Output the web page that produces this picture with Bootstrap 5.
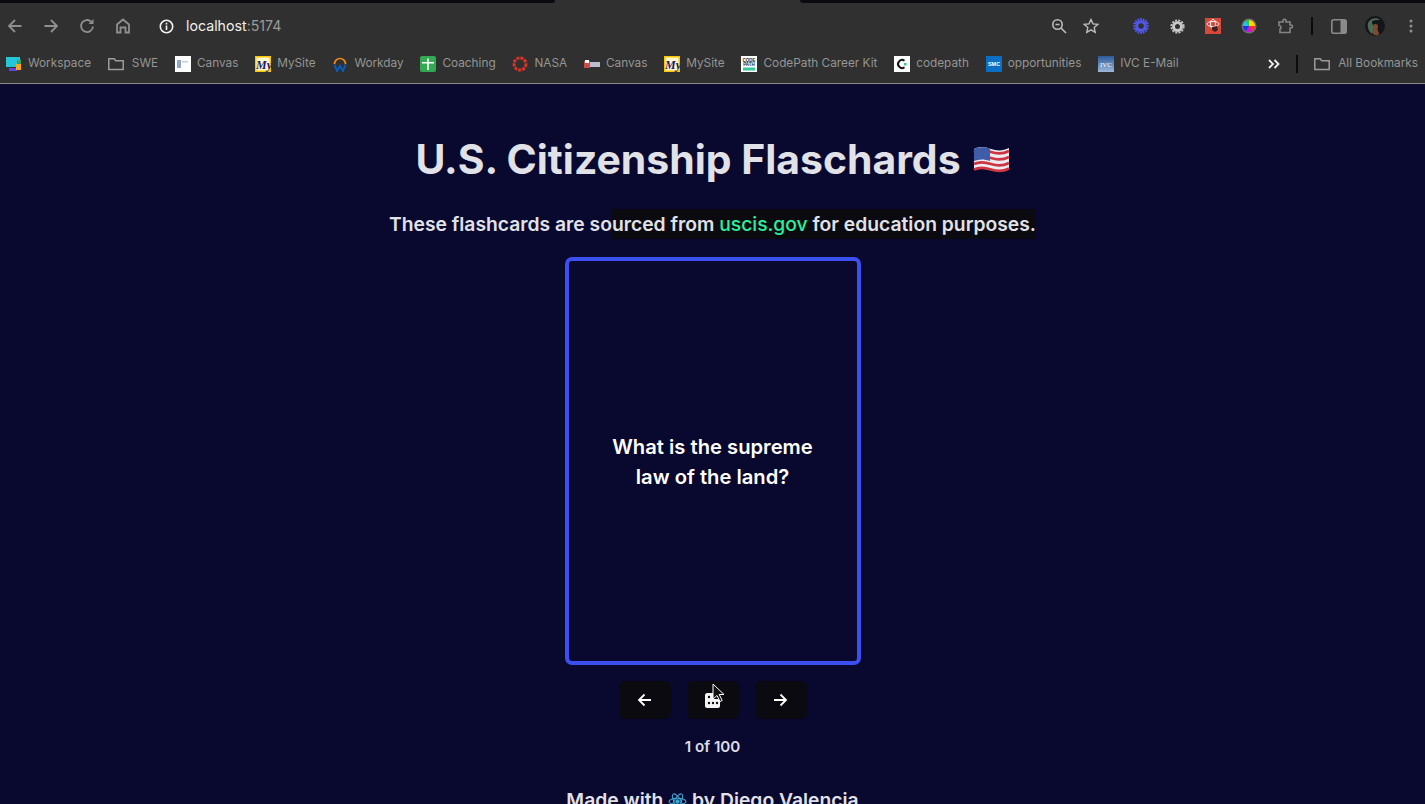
<!DOCTYPE html>
<html lang="en">
<head>
    <meta charset="UTF-8">
    <title>U.S. Citizenship Flaschards</title>
    <link rel="stylesheet" href="https://cdn.jsdelivr.net/npm/bootstrap@5.3.0/dist/css/bootstrap.min.css">
    <style>
        html, body { height: 100%; overflow: hidden; }
        body { background: #09082e; font-family: Inter, "Liberation Sans", sans-serif; color: #e1e1e8; }
        .top-strip { height: 3px; background: #2f302f; }
        .top-strip span { background: #0a0a12; }
        .strip-a { width: 555px; border-bottom-right-radius: 3px; }
        .strip-b { flex: 1; margin-left: 245px; border-bottom-left-radius: 3px; }
        .tool-row { height: 46px; background: #2f302f; padding-left: 0; overflow: hidden; }
        .tool-slot { width: 36px; height: 36px; flex: none; }
        .slot-back { margin-left: -3px; }
        .slot-info { margin-left: 7px; }
        .slot-star { margin-left: -4px; margin-right: 14px; }
        .slot-dots { width: 28px; }
        .url-text { font-size: 14.2px; color: #f0f0f0; margin-left: 2px; }
        .url-text span { color: #9b9b9b; }
        .v-sep { width: 2px; height: 18px; background: #0b0b0b; flex: none; }
        .mark-row { height: 29px; background: #2f302f; border-bottom: 1px solid #8a8a8a; box-sizing: content-box; padding: 0 7px 5px 6px; font-size: 11.8px; color: #959595; gap: 16.8px; white-space: nowrap; }
        .mark-item { gap: 6px; }
        .folder-item { gap: 8px; }
        .fav { width: 16px; height: 16px; flex: none; display: block; }
        .mark-sep { margin: 0 16px; }
        .main-page { padding-top: 53px; }
        .main-title { font-size: 40.9px; font-weight: 700; line-height: 44px; margin: 0 0 29px; color: #e1e1e8; gap: 12px; }
        .sub-line { font-size: 19.3px; font-weight: 600; line-height: 29px; margin: 0 0 18px; white-space: nowrap; }
        .sub-dark { background: #0a0a10; padding: 3px 0; }
        .sub-link { color: #2bf09e; font-weight: 500; text-decoration: none; }
        .flash-box { width: 296px; height: 408px; border: 4px solid #3c4ff0; border-radius: 7px; font-size: 20.2px; font-weight: 600; line-height: 30px; color: #fff; padding: 2px 32px 0; }
        .nav-btns { gap: 16px; margin-top: 16px; }
        .nav-btn { width: 52px; height: 38px; background: #0a0a10; border: 0; border-radius: 6px; padding: 0; }
        .nav-btn:hover { background: #0a0a10; }
        .count-line { font-size: 15.2px; font-weight: 600; line-height: 20px; margin: 18px 0 0; color: #dcdce4; }
        .made-line { font-size: 19.3px; font-weight: 600; line-height: 24px; margin: 31px 0 0; white-space: nowrap; }
        .cursor-mark { position: absolute; left: 25px; top: 2px; width: 13px; height: 20px; }
    </style>
</head>
<body>
    <header>
        <div class="top-strip d-flex">
            <span class="strip-a"></span>
            <span class="strip-b"></span>
        </div>
        <div class="tool-row d-flex align-items-center">
            <div class="tool-slot slot-back d-flex align-items-center justify-content-center">
                <svg width="16" height="16" viewBox="0 0 16 16" fill="none" stroke="#8f8f8f" stroke-width="1.800"><path d="M14.500 8H2M8 2 2 8l6 6"/></svg>
            </div>
            <div class="tool-slot d-flex align-items-center justify-content-center">
                <svg width="16" height="16" viewBox="0 0 16 16" fill="none" stroke="#8f8f8f" stroke-width="1.800"><path d="M1.500 8H14M8 2l6 6-6 6"/></svg>
            </div>
            <div class="tool-slot d-flex align-items-center justify-content-center">
                <svg width="16" height="16" viewBox="0 0 16 16" fill="none" stroke="#8f8f8f" stroke-width="1.800"><path d="M14 8.500A6 6 0 1 1 12.300 3.800"/><path d="M14.500 1v5h-5z" fill="#8f8f8f" stroke="none"/></svg>
            </div>
            <div class="tool-slot d-flex align-items-center justify-content-center">
                <svg width="16" height="16" viewBox="0 0 16 16" fill="none" stroke="#8f8f8f" stroke-width="1.800"><path d="M2 14.500V6.500L8 1.500l6 5v8h-3.500V9.500h-5v5z"/></svg>
            </div>
            <div class="tool-slot slot-info d-flex align-items-center justify-content-center">
                <svg width="15" height="15" viewBox="0 0 15 15" fill="none" stroke="#f2f2f2" stroke-width="1.600"><circle cx="7.500" cy="7.500" r="6.200"/><path d="M7.500 6.500v4.500M7.500 3.800v1.600"/></svg>
            </div>
            <div class="url-text flex-grow-1">localhost<span>:5174</span></div>
            <div class="tool-slot d-flex align-items-center justify-content-center">
                <svg width="16" height="16" viewBox="0 0 16 16" fill="none" stroke="#bdbdbd" stroke-width="1.600"><circle cx="6.500" cy="6.500" r="4.700"/><path d="M10 10l5 5M4.500 6.500h4"/></svg>
            </div>
            <div class="tool-slot slot-star d-flex align-items-center justify-content-center">
                <svg width="16" height="16" viewBox="0 0 16 16" fill="none" stroke="#bdbdbd" stroke-width="1.400"><path d="M8 1.500l2 4.400 4.700.5-3.500 3.200 1 4.700L8 11.900l-4.200 2.400 1-4.700L1.300 6.400l4.700-.5z"/></svg>
            </div>
            <div class="tool-slot d-flex align-items-center justify-content-center">
                <svg width="16" height="16" viewBox="0 0 16 16" fill="none" stroke="#5458ee" stroke-width="1.700"><path d="M8 0v16M0 8h16M2.300 2.300l11.400 11.400M13.700 2.300 2.300 13.700M4.900 .7l6.200 14.600M11.100 .7 4.900 15.300M.7 4.900l14.600 6.200M15.300 4.900.7 11.100"/><circle cx="8" cy="8" r="2.800" fill="#2f302f" stroke="none"/></svg>
            </div>
            <div class="tool-slot d-flex align-items-center justify-content-center">
                <svg width="15" height="15" viewBox="0 0 15 15" fill="none" stroke="#c8c8c8"><circle cx="7.500" cy="7.500" r="4" stroke-width="3"/><circle cx="7.500" cy="7.500" r="6.300" stroke-width="1.600" stroke-dasharray="2 1.300"/></svg>
            </div>
            <div class="tool-slot d-flex align-items-center justify-content-center">
                <svg width="16" height="16" viewBox="0 0 16 16" fill="none"><rect width="16" height="16" fill="#d5483a"/><g stroke="#fff" stroke-width=".9"><ellipse cx="8" cy="6" rx="6" ry="2.500"/><ellipse cx="8" cy="6" rx="2.500" ry="4.500"/></g><path d="M7 9l5-1 1 4-3 2-3-2z" fill="#3a2320"/></svg>
            </div>
            <div class="tool-slot d-flex align-items-center justify-content-center">
                <svg width="16" height="16" viewBox="0 0 16 16"><circle cx="8" cy="8" r="7.500" fill="#707070"/><path d="M8 8V2a6 6 0 0 1 6 6z" fill="#ffd400"/><path d="M8 8h6a6 6 0 0 1-3 5.200z" fill="#ff2d2d"/><path d="M8 8l3 5.200a6 6 0 0 1-6 0z" fill="#d012d8"/><path d="M8 8l-3 5.200A6 6 0 0 1 2 8z" fill="#2233ee"/><path d="M8 8H2a6 6 0 0 1 3-5.200z" fill="#19c8e8"/><path d="M8 8 5 2.800A6 6 0 0 1 8 2z" fill="#22d33a"/></svg>
            </div>
            <div class="tool-slot d-flex align-items-center justify-content-center">
                <svg width="17" height="16" viewBox="0 0 17 16" fill="none" stroke="#858585" stroke-width="1.600"><path d="M2 4h4V2.500C6 .8 9 .8 9 2.500V4h4v3h1c2 0 2 3 0 3h-1v4.500H3V11c1.500 0 1.500-3.500-1-3.500z"/></svg>
            </div>
            <div class="v-sep mx-2"></div>
            <div class="tool-slot d-flex align-items-center justify-content-center">
                <svg width="16" height="15" viewBox="0 0 16 15" fill="none"><rect x=".8" y=".8" width="14.400" height="13.400" rx="2" stroke="#8a8a8a" stroke-width="1.600"/><rect x="9.500" y="1" width="5.500" height="13" fill="#8a8a8a"/></svg>
            </div>
            <div class="tool-slot me-1 d-flex align-items-center justify-content-center">
                <svg width="20" height="20" viewBox="0 0 20 20"><circle cx="10" cy="10" r="10" fill="#15151a"/><path d="M3 7c2-5 9-6 12-3-3 0-8 0-8 2 0 3 2 3 2 6 0 2-1 4-2 6-3-2-5-7-4-11z" fill="#4c6a58"/><path d="M8 9c2-2 5-1 5 1s-1 3 0 5 2 3 0 4c-2 1-4 0-5-1-1-3 1-4 0-9z" fill="#7b4a30"/></svg>
            </div>
            <div class="tool-slot slot-dots d-flex align-items-center justify-content-center">
                <svg width="4" height="14" viewBox="0 0 4 14" fill="#8f8f8f"><circle cx="2" cy="2" r="1.500"/><circle cx="2" cy="7" r="1.500"/><circle cx="2" cy="12" r="1.500"/></svg>
            </div>
        </div>
        <div class="mark-row d-flex align-items-center">
            <div class="d-flex align-items-center mark-item">
                <svg class="fav" viewBox="0 0 16 16"><rect y="1" width="14" height="10" fill="#26c6da"/><rect x="3" y="12" width="8" height="3" fill="#6a3fe0"/><rect x="10" y="8" width="5" height="6" fill="#f5a623"/><path d="M11 8V3l2 2 2-2v5z" fill="#43a047"/></svg>
                <span>Workspace</span>
            </div>
            <div class="d-flex align-items-center folder-item">
                <svg class="fav" viewBox="0 0 16 16" fill="none" stroke="#9c9c9c" stroke-width="1.500"><path d="M.8 13.500V2.800h5.400l1.500 2h7.500v8.700z"/></svg>
                <span>SWE</span>
            </div>
            <div class="d-flex align-items-center mark-item">
                <svg class="fav" viewBox="0 0 16 16"><rect width="16" height="16" fill="#fff"/><rect x="2" y="4" width="4" height="8" fill="#8ea4c8"/><rect x="7" y="5" width="6" height="1.500" fill="#c5cedd"/></svg>
                <span>Canvas</span>
            </div>
            <div class="d-flex align-items-center mark-item">
                <svg class="fav" viewBox="0 0 16 16"><rect width="16" height="16" fill="#fbc600"/><rect x="1.500" y="1.500" width="13" height="13" fill="#fff8cf"/><text x="1" y="12.500" font-family="Liberation Serif" font-style="italic" font-weight="700" font-size="12" fill="#1a1a6e">My</text></svg>
                <span>MySite</span>
            </div>
            <div class="d-flex align-items-center mark-item">
                <svg class="fav" viewBox="0 0 16 16" fill="none"><path d="M2.500 8a5.500 5.500 0 0 1 11 0" stroke="#f08a10" stroke-width="1.700"/><path d="M2.500 8.500 5 15l3-5 3 5 2.500-6.500" stroke="#0a5cb8" stroke-width="2"/></svg>
                <span>Workday</span>
            </div>
            <div class="d-flex align-items-center mark-item">
                <svg class="fav" viewBox="0 0 16 16"><rect width="16" height="16" rx="2" fill="#34a853"/><path d="M2 6h12v1.500H2zM7.200 2.500h1.600V14H7.200z" fill="#fff"/></svg>
                <span>Coaching</span>
            </div>
            <div class="d-flex align-items-center mark-item">
                <svg class="fav" viewBox="0 0 16 16" fill="none"><circle cx="8" cy="8" r="6" stroke="#d8352a" stroke-width="3" stroke-dasharray="3 1"/></svg>
                <span>NASA</span>
            </div>
            <div class="d-flex align-items-center mark-item">
                <svg class="fav" viewBox="0 0 16 16"><rect y="5" width="6" height="7" fill="#c94b4b"/><rect x="1" y="4" width="4" height="3" fill="#fff"/><rect x="6" y="6" width="10" height="5" fill="#b9c0cc"/></svg>
                <span>Canvas</span>
            </div>
            <div class="d-flex align-items-center mark-item">
                <svg class="fav" viewBox="0 0 16 16"><rect width="16" height="16" fill="#fbc600"/><rect x="1.500" y="1.500" width="13" height="13" fill="#fff8cf"/><text x="1" y="12.500" font-family="Liberation Serif" font-style="italic" font-weight="700" font-size="12" fill="#1a1a6e">My</text></svg>
                <span>MySite</span>
            </div>
            <div class="d-flex align-items-center mark-item">
                <svg class="fav" viewBox="0 0 16 16"><rect width="16" height="16" fill="#fff"/><text x="8" y="5.500" text-anchor="middle" font-family="Liberation Sans" font-weight="700" font-size="4.500" fill="#222">CODE</text><text x="8" y="10" text-anchor="middle" font-family="Liberation Sans" font-weight="700" font-size="4.500" fill="#222">PATH</text><rect x="2" y="11.500" width="12" height="3" fill="#35c89a"/></svg>
                <span>CodePath Career Kit</span>
            </div>
            <div class="d-flex align-items-center mark-item">
                <svg class="fav" viewBox="0 0 16 16" fill="none"><rect width="16" height="16" fill="#fff"/><path d="M10.500 4.800a4 4 0 1 0 0 6.400" stroke="#111" stroke-width="2"/><rect x="10" y="7" width="2.500" height="2.500" fill="#35c89a"/></svg>
                <span>codepath</span>
            </div>
            <div class="d-flex align-items-center mark-item">
                <svg class="fav" viewBox="0 0 16 16"><rect width="16" height="16" fill="#0a6fc2"/><text x="8" y="10" text-anchor="middle" font-family="Liberation Sans" font-weight="700" font-size="5.500" fill="#fff">SMC</text></svg>
                <span>opportunities</span>
            </div>
            <div class="d-flex align-items-center mark-item">
                <svg class="fav" viewBox="0 0 16 16"><defs><linearGradient id="ivcBlue" x1="0" y1="0" x2="0" y2="1"><stop offset="0" stop-color="#2c5a9a"/><stop offset="1" stop-color="#9db8d8"/></linearGradient></defs><rect width="16" height="16" fill="url(#ivcBlue)"/><text x="8" y="11" text-anchor="middle" font-family="Liberation Serif" font-size="7" fill="#fff">IVC</text></svg>
                <span>IVC E-Mail</span>
            </div>
            <div class="d-flex align-items-center ms-auto">
                <svg width="12" height="10" viewBox="0 0 12 10" fill="none" stroke="#f0f0f0" stroke-width="1.800"><path d="M1 1l4 4-4 4M6.500 1l4 4-4 4"/></svg>
                <div class="v-sep mark-sep"></div>
                <div class="d-flex align-items-center folder-item">
                    <svg class="fav" viewBox="0 0 16 16" fill="none" stroke="#9c9c9c" stroke-width="1.500"><path d="M.8 13.500V2.800h5.400l1.500 2h7.500v8.700z"/></svg>
                    <span>All Bookmarks</span>
                </div>
            </div>
        </div>
    </header>

    <main class="main-page d-flex flex-column align-items-center text-center">
        <h1 class="main-title d-flex align-items-center">U.S. Citizenship Flaschards
            <svg width="37" height="29" viewBox="0 0 37 29">
                <path d="M1 4c6-3 11-2 17 0s12 2 18-1v21c-6 3-12 3-18 1s-11-2-17 0z" fill="#ececf0"/>
                <path d="M1 7c6-3 11-2 17 0s12 2 18-1M1 13c6-3 11-2 17 0s12 2 18-1M1 19c6-3 11-2 17 0s12 2 18-1M1 24.500c6-3 11-2 17 0s12 2 18-1" fill="none" stroke="#cf3540" stroke-width="2.800"/>
                <path d="M1 4c5-2.500 10-2.200 16-.4V16c-6-2-11-2-16 0z" fill="#3f5ca8"/>
            </svg>
        </h1>
        <p class="sub-line">These flashcards are so<span class="sub-dark">urced from <a class="sub-link" href="#">uscis.gov</a> for education purposes.</span></p>
        <div class="flash-box d-flex align-items-center justify-content-center">What is the supreme law of the land?</div>
        <div class="nav-btns d-flex">
            <button class="btn nav-btn d-flex align-items-center justify-content-center" aria-label="Previous">
                <svg width="15" height="14" viewBox="0 0 15 14" fill="none" stroke="#fff" stroke-width="1.800"><path d="M14 7H2M7.500 1.500 2 7l5.500 5.500"/></svg>
            </button>
            <button class="btn nav-btn d-flex align-items-center justify-content-center position-relative" aria-label="Shuffle">
                <svg width="16" height="16" viewBox="0 0 16 16"><path d="M2 1h6l1 6h4c1 0 2 1 2 2v5c0 1-1 2-2 2H2c-1 0-2-1-2-2V3c0-1 1-2 2-2z" fill="#f4f4f4"/><circle cx="4" cy="5" r="1.200" fill="#0a0a10"/><circle cx="4" cy="11" r="1.200" fill="#0a0a10"/><circle cx="8" cy="11" r="1.200" fill="#0a0a10"/><circle cx="12" cy="11" r="1.200" fill="#0a0a10"/></svg>
                <svg class="cursor-mark" viewBox="0 0 13 20"><path d="M1 1v15l4-3.500 3 6 2.200-1-3-6H12z" fill="#111" stroke="#fff" stroke-width="1"/></svg>
            </button>
            <button class="btn nav-btn d-flex align-items-center justify-content-center" aria-label="Next">
                <svg width="15" height="14" viewBox="0 0 15 14" fill="none" stroke="#fff" stroke-width="1.800"><path d="M1 7h12M7.500 1.500 13 7l-5.500 5.500"/></svg>
            </button>
        </div>
        <p class="count-line">1 of 100</p>
        <p class="made-line">Made with
            <svg width="19" height="19" viewBox="0 0 20 20" fill="none" stroke="#3fa9d6" stroke-width="1.100"><ellipse cx="10" cy="10" rx="9" ry="3.500"/><ellipse cx="10" cy="10" rx="9" ry="3.500" transform="rotate(60 10 10)"/><ellipse cx="10" cy="10" rx="9" ry="3.500" transform="rotate(120 10 10)"/><circle cx="10" cy="10" r="1.800" fill="#3fa9d6"/></svg>
            by Diego Valencia</p>
    </main>
</body>
</html>
